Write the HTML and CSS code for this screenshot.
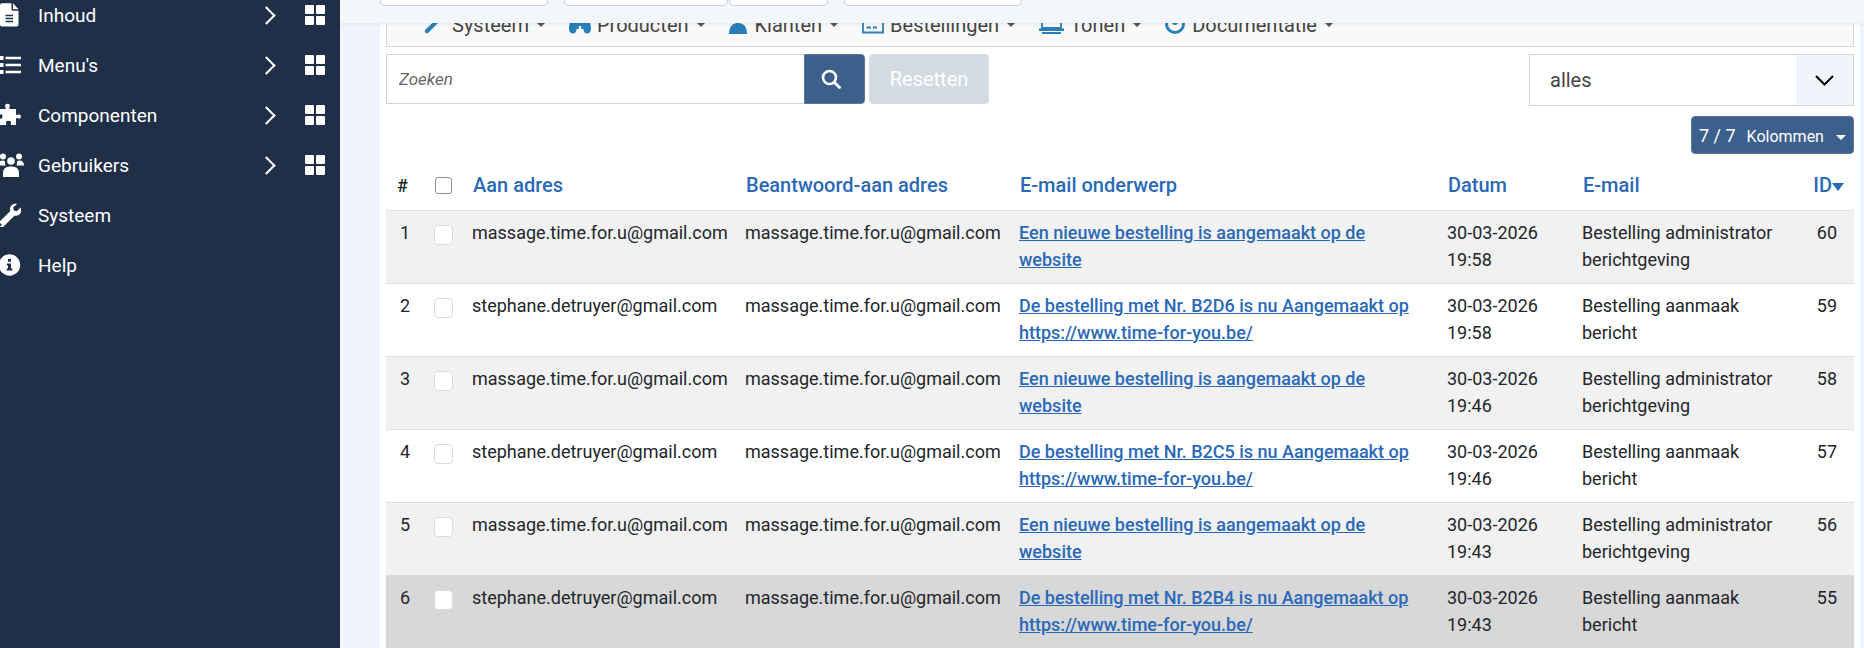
FILE: index.html
```html
<!DOCTYPE html>
<html lang="nl">
<head>
    <meta charset="UTF-8">
    <title>E-mail geschiedenis</title>
    <link rel="stylesheet" href="styles.css">
</head>
<body>
    <div class="layout">
        <aside class="sidebar">
            <ul class="side-menu">
                <li class="side-item">
                    <svg class="side-icon" viewBox="0 0 24 24"><path fill="#fff" d="M2 .3h9.500v6A1.500 1.500 0 0 0 13 7.800h5.500V21.500a2 2 0 0 1-2 2H2a2 2 0 0 1-2-2V2.300a2 2 0 0 1 2-2zM13 .3l5.500 6H13z"/><path stroke="#1f2f48" stroke-width="1.300" d="M5.500 12.500h7.500M5.500 15.500h7.500M5.500 18.500h7.500"/></svg>
                    <span class="side-label">Inhoud</span>
                    <span class="side-chevron"></span>
                    <span class="side-grid"><i></i><i></i><i></i><i></i></span>
                </li>
                <li class="side-item">
                    <svg class="side-icon" viewBox="0 0 24 24"><path fill="#fff" d="M0 3h3.500v4H0zM0 10h3.500v4H0zM0 17h3.500v4H0zM5.500 3.700H21v2.500H5.500zM5.500 10.700H21v2.500H5.500zM5.500 17.700H21v2.500H5.500z"/></svg>
                    <span class="side-label">Menu's</span>
                    <span class="side-chevron"></span>
                    <span class="side-grid"><i></i><i></i><i></i><i></i></span>
                </li>
                <li class="side-item">
                    <svg class="side-icon" viewBox="0 0 24 24"><path fill="#fff" d="M-2 6h7c1 0 1-.8.5-1.700C4.500 2.500 5.500.8 7.500.8s3 1.700 2 3.500C9 5.200 9 6 10 6h6v5c0 1 .8 1.300 1.700.8 1.300-.7 3.300-.2 3.300 1.700s-2 2.400-3.300 1.700c-.9-.5-1.700-.2-1.700.8v6h-4.500c-1 0-1-.8-.6-1.500.7-1.300-.4-2.800-2.400-2.800s-3.100 1.500-2.400 2.800c.4.700.4 1.500-.6 1.500H-2V16c0-1 1-1.300 1.800-.7 1.200.8 2.700.2 2.700-1.800s-1.500-2.600-2.700-1.800C-1 12.300-2 12-2 11z"/></svg>
                    <span class="side-label">Componenten</span>
                    <span class="side-chevron"></span>
                    <span class="side-grid"><i></i><i></i><i></i><i></i></span>
                </li>
                <li class="side-item">
                    <svg class="side-icon" viewBox="0 0 24 24"><g fill="#fff"><circle cx="3" cy="3.500" r="3"/><circle cx="19" cy="3.500" r="3"/><circle cx="11" cy="8" r="3.800"/><path d="M-2 12.500c0-3.500 2-5 4.500-5 1 0 2 .3 2.700 1-.5 1-.3 2.500.3 4zM24 12.500c0-3.500-2-5-4.500-5-1 0-2 .3-2.700 1 .5 1 .3 2.500-.3 4zM3 24v-4c0-4.500 3-6.500 8-6.500s8 2 8 6.500v4z"/></g></svg>
                    <span class="side-label">Gebruikers</span>
                    <span class="side-chevron"></span>
                    <span class="side-grid"><i></i><i></i><i></i><i></i></span>
                </li>
                <li class="side-item">
                    <svg class="side-icon" viewBox="0 0 24 24"><path fill="#fff" fill-rule="evenodd" d="M20.500 4.500l-3.700 3.700-3-.6-.6-3L17 1c-3.500-1-7 1.500-7 5 0 .8.100 1.300.3 1.900L-.5 18.700c-1.300 1.300-1.300 3.300 0 4.500 1.200 1.200 3.200 1.200 4.400 0L14.700 12.400c4 1.300 8.300-2.800 5.800-7.900zM1.500 21.800a1.300 1.300 0 1 1 0-.1z"/></svg>
                    <span class="side-label">Systeem</span>
                </li>
                <li class="side-item">
                    <svg class="side-icon" viewBox="0 0 24 24"><circle cx="9.500" cy="12" r="10.700" fill="#fff"/><path fill="#1f2f48" d="M8 6h3v2.800H8zM6.800 10.500H11v5h1.400v2H6.700v-2H8v-3H6.800z"/></svg>
                    <span class="side-label">Help</span>
                </li>
            </ul>
        </aside>

        <main class="content">
            <!-- balk bovenaan blijft over de pagina liggen -->
            <div class="topbar">
                <span class="top-btn top-btn-a"></span>
                <span class="top-btn top-btn-b"></span>
                <span class="top-btn top-btn-c"></span>
                <span class="top-btn top-btn-d"></span>
            </div>

            <div class="panel">
                <nav class="toolbar">
                    <span class="tool">
                        <svg class="tool-icon" viewBox="0 0 20 20"><path fill="#2a7fba" d="M19 3l-3 3-2-.5L13.500 3l3-3c-3-.5-6 1.500-5 5L0 16c-1 1 0 4 3 3L14 8c3 1 6-2 5-5z"/></svg>Systeem<b class="caret"></b>
                    </span>
                    <span class="tool">
                        <svg class="tool-icon tool-icon-md" viewBox="0 0 22 20"><path fill="#2a7fba" d="M4 4h5v2h4V4h5c2 0 4 6 4 11 0 3-2 4.500-4 4.500-2.500 0-3.500-2-3.500-4.500h-7c0 2.500-1 4.500-3.500 4.500-2 0-4-1.500-4-4.500C0 10 2 4 4 4z"/><path fill="#f9f9f9" d="M9.800 12h2.400v6H9.800z"/></svg>Producten<b class="caret"></b>
                    </span>
                    <span class="tool">
                        <svg class="tool-icon tool-icon-sm" viewBox="0 0 18 20"><circle cx="9" cy="5" r="5" fill="#2a7fba"/><path fill="#2a7fba" d="M0 20c0-7 3-11 9-11s9 4 9 11z"/></svg>Klanten<b class="caret"></b>
                    </span>
                    <span class="tool">
                        <svg class="tool-icon tool-icon-md" viewBox="0 0 22 20"><path fill="none" stroke="#2a7fba" stroke-width="1.800" d="M1 3h20v15.500H1z"/><path stroke="#2a7fba" stroke-width="1.800" d="M1 6h20M4.500 13.500h4.500M11 13.500h4"/></svg>Bestellingen<b class="caret"></b>
                    </span>
                    <span class="tool">
                        <svg class="tool-icon tool-icon-lg" viewBox="0 0 25 20"><path fill="none" stroke="#2a7fba" stroke-width="1.800" d="M3 1h19v13H3z"/><path fill="#2a7fba" d="M0 14.500h25V17H0zM3 18h19v2H3z"/></svg>Tonen<b class="caret"></b>
                    </span>
                    <span class="tool">
                        <svg class="tool-icon" viewBox="0 0 20 20"><circle cx="10" cy="10" r="8.500" fill="none" stroke="#2a7fba" stroke-width="3"/><circle cx="10" cy="8" r="3" fill="#2a7fba"/></svg>Documentatie<b class="caret"></b>
                    </span>
                </nav>

                <div class="filters">
                    <input class="search-input" type="text" placeholder="Zoeken">
                    <button class="search-btn">
                        <svg viewBox="0 0 20 20" width="20" height="20"><circle cx="8.500" cy="8.500" r="6.500" fill="none" stroke="#fff" stroke-width="2.600"/><path stroke="#fff" stroke-width="2.800" stroke-linecap="round" d="M13.500 13.500l5 5"/></svg>
                    </button>
                    <button class="reset-btn">Resetten</button>
                    <div class="select-box">
                        <span class="select-value">alles</span>
                        <span class="select-arrow">
                            <svg viewBox="0 0 19 11" width="19" height="11"><path fill="none" stroke="#000" stroke-width="2" d="M1 1l8.500 8.500L18 1"/></svg>
                        </span>
                    </div>
                </div>

                <div class="columns-row">
                    <button class="columns-btn"><span class="columns-count">7 / 7</span>Kolommen<b class="caret caret-white"></b></button>
                </div>

                <table class="mail-table">
                    <colgroup>
                        <col class="col-num"><col class="col-check"><col class="col-to"><col class="col-reply">
                        <col class="col-subject"><col class="col-date"><col class="col-type"><col class="col-id">
                    </colgroup>
                    <thead>
                        <tr>
                            <th class="num-head">#</th>
                            <th><span class="check check-head"></span></th>
                            <th>Aan adres</th>
                            <th>Beantwoord-aan adres</th>
                            <th>E-mail onderwerp</th>
                            <th>Datum</th>
                            <th>E-mail</th>
                            <th class="id-head">ID<b class="sort"></b></th>
                        </tr>
                    </thead>
                    <tbody>
                        <tr>
                            <td class="num">1</td><td><span class="check"></span></td>
                            <td>massage.time.for.u@gmail.com</td><td>massage.time.for.u@gmail.com</td>
                            <td class="subject"><a href="#">Een nieuwe bestelling is aangemaakt op de website</a></td>
                            <td>30-03-2026 19:58</td><td>Bestelling administrator berichtgeving</td><td class="id">60</td>
                        </tr>
                        <tr>
                            <td class="num">2</td><td><span class="check"></span></td>
                            <td>stephane.detruyer@gmail.com</td><td>massage.time.for.u@gmail.com</td>
                            <td class="subject"><a href="#">De bestelling met Nr. B2D6 is nu Aangemaakt op https://www.time-for-you.be/</a></td>
                            <td>30-03-2026 19:58</td><td>Bestelling aanmaak bericht</td><td class="id">59</td>
                        </tr>
                        <tr>
                            <td class="num">3</td><td><span class="check"></span></td>
                            <td>massage.time.for.u@gmail.com</td><td>massage.time.for.u@gmail.com</td>
                            <td class="subject"><a href="#">Een nieuwe bestelling is aangemaakt op de website</a></td>
                            <td>30-03-2026 19:46</td><td>Bestelling administrator berichtgeving</td><td class="id">58</td>
                        </tr>
                        <tr>
                            <td class="num">4</td><td><span class="check"></span></td>
                            <td>stephane.detruyer@gmail.com</td><td>massage.time.for.u@gmail.com</td>
                            <td class="subject"><a href="#">De bestelling met Nr. B2C5 is nu Aangemaakt op https://www.time-for-you.be/</a></td>
                            <td>30-03-2026 19:46</td><td>Bestelling aanmaak bericht</td><td class="id">57</td>
                        </tr>
                        <tr>
                            <td class="num">5</td><td><span class="check"></span></td>
                            <td>massage.time.for.u@gmail.com</td><td>massage.time.for.u@gmail.com</td>
                            <td class="subject"><a href="#">Een nieuwe bestelling is aangemaakt op de website</a></td>
                            <td>30-03-2026 19:43</td><td>Bestelling administrator berichtgeving</td><td class="id">56</td>
                        </tr>
                        <tr class="row-hover">
                            <td class="num">6</td><td><span class="check"></span></td>
                            <td>stephane.detruyer@gmail.com</td><td>massage.time.for.u@gmail.com</td>
                            <td class="subject"><a href="#">De bestelling met Nr. B2B4 is nu Aangemaakt op https://www.time-for-you.be/</a></td>
                            <td>30-03-2026 19:43</td><td>Bestelling aanmaak bericht</td><td class="id">55</td>
                        </tr>
                    </tbody>
                </table>
            </div>
        </main>
    </div>
</body>
</html>
```

FILE: styles.css
```css
html, body {
    margin: 0;
    height: 100%;
    overflow: hidden;
}
body {
    font-family: Roboto, "Liberation Sans", sans-serif;
    font-size: 18px;
    color: #22262a;
    background-color: #f0f4fb;
}
.layout {
    display: flex;
    height: 648px;
    overflow: hidden;
}

/* Zijbalk */
.sidebar {
    width: 340px;
    flex-shrink: 0;
    background-color: #1f2f48;
    color: #fff;
}
.side-menu {
    list-style: none;
    margin: -10px 0 0;
    padding: 0;
}
.side-item {
    display: flex;
    align-items: center;
    height: 50px;
}
.side-icon {
    width: 24px;
    height: 24px;
    margin-right: 14px;
    overflow: hidden;
    flex-shrink: 0;
}
.side-label {
    flex: 1;
    font-size: 19px;
}
.side-chevron {
    width: 11px;
    height: 11px;
    border-top: 2px solid #fff;
    border-right: 2px solid #fff;
    transform: rotate(45deg);
    margin-right: 32px;
}
.side-grid {
    display: grid;
    grid-template-columns: 9px 9px;
    grid-template-rows: 9px 9px;
    gap: 1.500px 2px;
    padding-right: 15px;
}
.side-grid i {
    background-color: #fff;
    border-radius: 1px;
}

/* Inhoud */
.content {
    flex: 1;
    position: relative;
    min-width: 0;
}
.topbar {
    position: absolute;
    top: 0;
    left: 0;
    right: 0;
    height: 23px;
    background-color: #f3f6fa;
    box-shadow: 0 1px 4px rgba(0, 0, 0, 0.08);
    z-index: 2;
}
.top-btn {
    position: absolute;
    top: -6px;
    height: 12px;
    box-sizing: border-box;
    background-color: #fff;
    border: 1px solid #c8d0da;
    border-radius: 5px;
}
.top-btn-a { left: 40px; width: 168px; }
.top-btn-b { left: 224px; width: 164px; }
.top-btn-c { left: 389px; width: 99px; }
.top-btn-d { left: 504px; width: 178px; }

.panel {
    margin: 0 4px 0 40px;
    padding: 0 6px;
    height: 648px;
    background-color: #fff;
}
.toolbar {
    display: flex;
    align-items: center;
    box-sizing: border-box;
    height: 47px;
    padding: 3px 0 0 38px;
    background-color: #f9f9f9;
    border-bottom: 1px solid #d5d5d5;
    border-left: 1px solid #d5d5d5;
    border-right: 1px solid #d5d5d5;
    font-size: 20px;
    color: #444;
}
.tool {
    display: flex;
    align-items: center;
    margin-right: 23px;
}
.tool-icon {
    width: 20px;
    height: 20px;
    margin: -2px 7px 0 0;
}
.tool-icon-sm { width: 18px; margin-right: 8px; }
.tool-icon-md { width: 22px; margin-right: 6px; }
.tool-icon-lg { width: 25px; margin-right: 6px; }
.caret {
    display: inline-block;
    margin-left: 7px;
    border-top: 5px solid #555;
    border-left: 5px solid transparent;
    border-right: 5px solid transparent;
}
.caret-white {
    border-top-color: #fff;
    margin-left: 12px;
    vertical-align: middle;
}

.filters {
    display: flex;
    margin-top: 7px;
}
.search-input {
    box-sizing: border-box;
    width: 418px;
    height: 50px;
    padding: 0 12px;
    border: 1px solid #ced4da;
    border-right: none;
    font-family: inherit;
    font-size: 17px;
    font-style: italic;
    outline: none;
}
.search-input::placeholder {
    color: #666;
}
.search-btn {
    display: flex;
    align-items: center;
    justify-content: center;
    width: 61px;
    height: 50px;
    padding: 0 8px 0 0;
    background-color: #3c5f8c;
    border: 1px solid #5b7699;
    border-radius: 0 4px 4px 0;
}
.reset-btn {
    width: 120px;
    height: 50px;
    margin-left: 4px;
    background-color: #d3dae1;
    color: #fff;
    border: 1px solid #d8dee4;
    border-radius: 4px;
    font-family: inherit;
    font-size: 20px;
}
.select-box {
    display: flex;
    box-sizing: border-box;
    width: 325px;
    height: 52px;
    margin-left: auto;
    border: 1px solid #ced4da;
}
.select-value {
    flex: 1;
    padding-left: 20px;
    font-size: 20px;
    line-height: 50px;
    color: #444;
}
.select-arrow {
    display: flex;
    align-items: center;
    justify-content: center;
    width: 57px;
    background-color: #f0f4fb;
}
.columns-row {
    display: flex;
    justify-content: flex-end;
    margin-top: 10px;
}
.columns-btn {
    box-sizing: border-box;
    width: 163px;
    height: 38px;
    padding: 0 0 0 7px;
    text-align: left;
    white-space: nowrap;
    background-color: #3c5f8c;
    color: #fff;
    border: 1px solid #5b7699;
    border-radius: 4px;
    font-family: inherit;
    font-size: 16px;
}
.columns-count {
    font-size: 18px;
    margin-right: 11px;
}

/* Tabel */
.mail-table {
    width: 1468px;
    margin-top: 17px;
    border-collapse: collapse;
    table-layout: fixed;
}
.col-num { width: 37px; }
.col-check { width: 49px; }
.col-to { width: 273px; }
.col-reply { width: 274px; }
.col-subject { width: 428px; }
.col-date { width: 135px; }
.col-type { width: 200px; }
.col-id { width: 72px; }
.mail-table th {
    box-sizing: border-box;
    height: 39px;
    padding: 0 0 10px 1px;
    text-align: left;
    font-size: 20px;
    font-weight: 500;
    color: #2a69b8;
    vertical-align: middle;
}
.mail-table th.num-head {
    padding-left: 11px;
    color: #22262a;
    font-size: 18px;
}
.mail-table th.id-head {
    padding-right: 10px;
    text-align: right;
    white-space: nowrap;
}
.sort {
    display: inline-block;
    vertical-align: middle;
    border-top: 8px solid #2a69b8;
    border-left: 6px solid transparent;
    border-right: 6px solid transparent;
}
.mail-table td {
    height: 73px;
    box-sizing: border-box;
    padding: 8px 0 0;
    vertical-align: top;
    line-height: 27px;
    border-top: 1px solid #dee2e6;
}
.mail-table tbody tr:nth-child(odd) {
    background-color: #f1f1f1;
}
.mail-table tbody tr.row-hover {
    background-color: #d8d8d8;
}
.mail-table tbody tr.row-hover td {
    border-top-color: #d8d8d8;
}
.mail-table td.num {
    padding-left: 14px;
}
.mail-table td.subject {
    padding-right: 20px;
}
.mail-table td.id {
    padding-right: 17px;
    text-align: right;
}
.mail-table a {
    color: #2a69b8;
    font-weight: 500;
}
.check {
    display: block;
    box-sizing: border-box;
    width: 19px;
    height: 20px;
    margin: 6px 0 0 11px;
    background-color: #fff;
    border: 1px solid #d8dde3;
    border-radius: 4px;
}
.check-head {
    width: 17px;
    height: 17px;
    margin: 0 0 0 11px;
    border-color: #8f8f9d;
    border-radius: 3px;
}
```
